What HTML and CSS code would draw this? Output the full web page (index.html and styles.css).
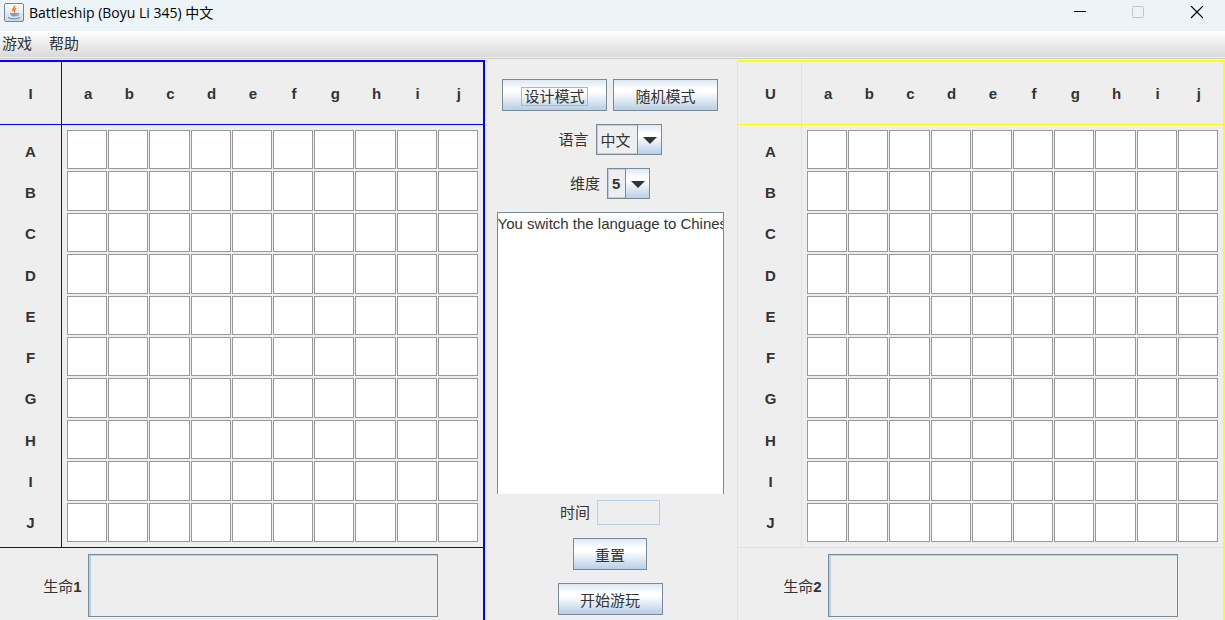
FILE: index.html
```html
<!DOCTYPE html>
<html lang="zh-CN">
<head>
<meta charset="utf-8">
<title>Battleship (Boyu Li 345) 中文</title>
<link rel="stylesheet" href="styles.css">
<script src="boards.js" defer></script>
</head>
<body>
<header class="titlebar">
  <svg class="app-icon" viewBox="0 0 20 20" width="20" height="20" aria-hidden="true">
    <defs><linearGradient id="tile" x1="0" y1="0" x2="0" y2="1"><stop offset="0" stop-color="#fff"/><stop offset="1" stop-color="#c9d7e2"/></linearGradient></defs>
    <rect x=".5" y=".5" width="19" height="18" rx="1.500" fill="url(#tile)" stroke="#74889b"/>
    <path d="M10.500 2.500c1 2-3 3-1.500 5.500M12 5c-2 1.500-2.500 2.500-1 4.500" fill="none" stroke="#e8822e" stroke-width="1.500"/>
    <path d="M6 10h7.500c0 2.500-1 3.500-3.500 3.500s-3.500-1-4-3.500z" fill="#7fa0bd"/>
    <path d="M13.500 10.500c2.500-.5 2 2-.8 2.200M4 14.500c3 1.800 9 1.800 12 0" fill="none" stroke="#5f87aa"/>
  </svg>
  <h1 class="title">Battleship (Boyu Li 345) 中文</h1>
  <div class="window-controls">
    <button class="window-button" type="button" aria-label="Minimize"><svg width="14" height="14" viewBox="0 0 14 14"><path d="M1 5.500h12" stroke="#000"/></svg></button>
    <button class="window-button" type="button" aria-label="Maximize" disabled><svg width="14" height="14" viewBox="0 0 14 14"><rect x="1.500" y=".5" width="11" height="11" rx="1" fill="none" stroke="#c3c6c8"/></svg></button>
    <button class="window-button" type="button" aria-label="Close"><svg width="14" height="14" viewBox="0 0 14 14"><path d="M2 0l12 12M14 0L2 12" stroke="#000" stroke-width="1.200"/></svg></button>
  </div>
</header>
<nav class="menubar">
  <button class="menu" type="button">游戏</button>
  <button class="menu" type="button">帮助</button>
</nav>
<main class="game">
  <section class="board board-own">
    <div class="corner">I</div>
    <div class="columns"></div>
    <div class="rows"></div>
    <div class="cells"></div>
    <div class="life"><label for="life1">生命<b>1</b></label><input class="life-box" id="life1" readonly></div>
  </section>
  <section class="controls">
    <div class="line modes">
      <button class="button" type="button"><span class="focus">设计模式</span></button>
      <button class="button" type="button">随机模式</button>
    </div>
    <div class="line language">
      <label for="language">语言</label>
      <span class="combo"><select class="select select-language" id="language"><option>中文</option><option>English</option></select><svg class="arrow" viewBox="0 0 23 29"><path d="M5 12h14l-7 7z" fill="#333"/></svg></span>
    </div>
    <div class="line dimension">
      <label for="dimension">维度</label>
      <span class="combo"><select class="select select-dimension" id="dimension"><option>5</option></select><svg class="arrow" viewBox="0 0 23 29"><path d="M5 12h14l-7 7z" fill="#333"/></svg></span>
    </div>
    <textarea class="log" aria-label="Log" wrap="off" readonly>You switch the language to Chinese</textarea>
    <div class="line time"><label for="time">时间</label><input class="time-box" id="time" readonly></div>
    <button class="button button-reset" type="button">重置</button>
    <button class="button" type="button">开始游玩</button>
  </section>
  <section class="board board-enemy">
    <div class="corner">U</div>
    <div class="columns"></div>
    <div class="rows"></div>
    <div class="cells"></div>
    <div class="life"><label for="life2">生命<b>2</b></label><input class="life-box" id="life2" readonly></div>
  </section>
</main>
</body>
</html>
```
FILE: styles.css
```css
* { box-sizing: border-box; }
body {
  margin: 0;
  min-height: 100vh;
  display: flex;
  flex-direction: column;
  overflow: hidden;
  background: #eee;
  color: #333;
  font: bold 15px/20px "Liberation Sans", "Noto Sans CJK SC", sans-serif;
}
button, input, select, textarea { margin: 0; padding: 0; font: inherit; color: inherit; border-radius: 0; }
label, .menu, .button, .select-language { font-weight: normal; }
.titlebar { display: flex; align-items: center; height: 31px; padding: 0 0 6px 4px; background: #edf4f7; color: #000; }
.title { flex: 1; margin: 0 0 0 5px; font: 14px/20px "Open Sans", "Noto Sans CJK SC", sans-serif; }
.window-controls { display: flex; }
.window-button { width: 58px; height: 24px; border: 0; background: none; display: grid; place-items: center; }
.menubar { display: flex; gap: 17px; height: 29px; padding: 0 2px 4px; background: linear-gradient(#fff, #dadada 26px, #eee 26px, #eee 27px, #ccc 27px, #ccc 28px, #eee 28px); }
.menu { border: 0; background: none; }
.game { flex: 1; display: grid; grid-template-columns: 485fr 252px 488fr; align-items: stretch; }
.board { display: grid; grid-template-rows: 63px 423px 1fr; border-top: 2px solid var(--line); border-right: 2px solid var(--line); }
.board-own { --line: #00f; grid-template-columns: 62px 1fr; }
.board-enemy { --line: #ff0; grid-template-columns: 64px 1fr; border-left: 1px solid #ff0; }
.corner, .columns, .rows, .cells { border-bottom: 1px solid var(--line); }
.corner, .rows { border-right: 1px solid var(--line); }
.corner { display: grid; place-items: center; padding-top: 2px; }
.board-enemy .corner, .board-enemy .rows { padding-left: 2px; }
.columns, .cells { display: grid; grid-template-columns: repeat(10, 1fr); gap: 2px 1px; padding: 5px; }
.columns { place-items: center; padding: 6px 4px 5px 6px; }
.rows { display: grid; grid-template-rows: repeat(10, 1fr); place-items: center; padding: 6px 0 3px; }
.cells { grid-template-rows: repeat(10, 1fr); }
.cell { background: #fff; border: 1px solid #999; }
.life { grid-column: 1 / -1; display: flex; align-items: center; justify-content: center; gap: 6px; padding-top: 6px; align-self: start; }
.board-own .life { padding-right: 2px; }
.life label { padding-top: 2px; }
.life-box { width: 350px; height: 63px; border: 1px solid #7a8a99; background: #eee; box-shadow: inset 0 1px #b8cfe5, inset 2px 0 #b8cfe5; }
.controls { display: flex; flex-direction: column; align-items: center; padding: 19px 11px 5px 9px; }
.line { display: flex; align-items: center; gap: 7px; }
.line label { padding-top: 1px; }
.modes { gap: 6px; margin-bottom: 13px; }
.button { width: 105px; height: 32px; padding-top: 3px; border: 1px solid #7a8a99; background: linear-gradient(#dde8f3, #fff 30%, #fff 40%, #b8cfe5); }
.button-reset { width: 74px; margin-bottom: 13px; }
.focus { padding: 0 2px; border: 1px solid #a3b8cc; }
.language { margin-bottom: 13px; }
.combo { display: grid; }
.select { grid-area: 1 / 1; height: 31px; appearance: none; padding-left: 4px; border: 1px solid #7a8a99; background: #eee; box-shadow: inset 0 0 0 1px #b8cfe5; }
.select-language { width: 66px; padding-top: 2px; }
.select-dimension { width: 43px; }
.arrow { grid-area: 1 / 1; place-self: center end; width: 25px; height: 31px; border: 1px solid #7a8a99; background: linear-gradient(#dde8f3, #fff 30%, #fff 40%, #b8cfe5); pointer-events: none; }
.log { width: 227px; height: 282px; margin: 13px 0 6px; padding: 1px 0; border: 1px solid #7a8a99; border-bottom: 0; background: #fff; font-weight: normal; resize: none; overflow: hidden; }
.time { margin-bottom: 13px; }
.time-box { width: 63px; height: 25px; border: 1px solid #b8cfe5; background: #eee; }
```
FILE: boards.js
```js
const letters = [..."abcdefghij"];
const append = (parent, className, text) => {
  const item = document.createElement("div");
  item.className = className;
  item.textContent = text;
  parent.append(item);
};
document.querySelectorAll(".board").forEach((board) => {
  letters.forEach((letter) => {
    append(board.querySelector(".columns"), "letter", letter);
    append(board.querySelector(".rows"), "letter", letter.toUpperCase());
  });
  for (let i = 0; i < 100; i += 1) append(board.querySelector(".cells"), "cell", "");
});
```
